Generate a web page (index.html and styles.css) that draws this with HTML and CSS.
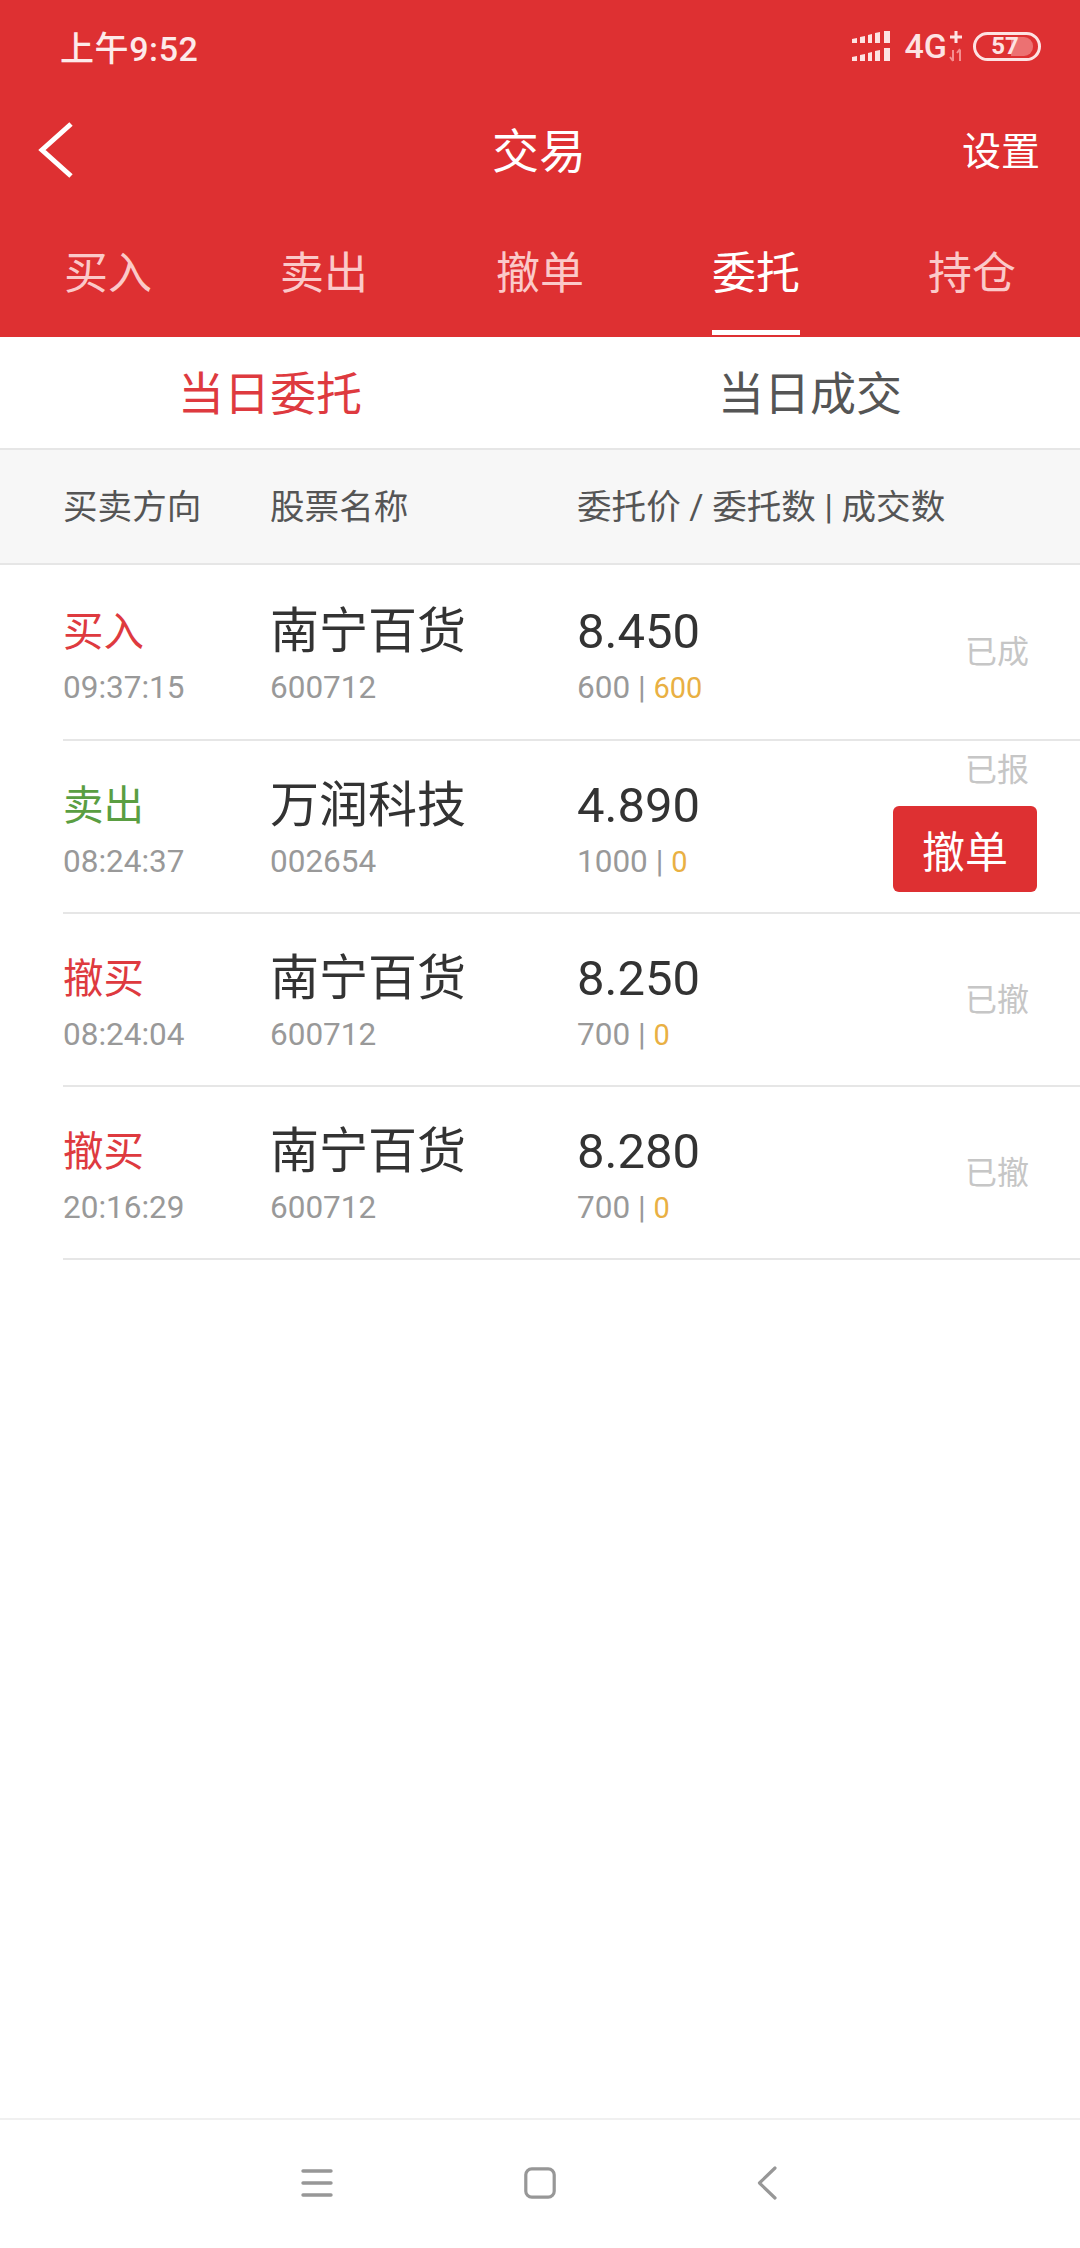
FILE: index.html
```html
<!DOCTYPE html>
<html lang="zh-CN">
<head>
<meta charset="utf-8">
<title>交易</title>
<link rel="stylesheet" href="styles.css">
</head>
<body>
<div class="app">
  <header class="head">
    <div class="status">
      <span class="time">上午9:52</span>
      <div class="sys">
        <svg class="signal" width="40" height="30" viewBox="0 0 40 30" fill="#fde3e3">
          <path d="M0 8l5-1v5H0zM8 6l5-1v7H8zM16 4l4-1v9h-4zM23 2l5-1v11h-5zM32 0h6v12h-6z"/>
          <path d="M0 26l5-1v5H0zM8 24l5-1v7H8zM16 22l4-1v9h-4zM23 20l5-1v11h-5zM32 17h6v13h-6z"/>
        </svg>
        <span class="net">4G</span>
        <svg class="plus" width="14" height="32" viewBox="0 0 14 32">
          <path d="M7 1v12M1 7h12" stroke="#fde3e3" stroke-width="3" fill="none"/>
          <path d="M4 31V20M1 27l3 4M11 31V20M8 23l3-4" stroke="#f58f8f" stroke-width="2" fill="none"/>
        </svg>
        <div class="battery"><span class="charge"></span><span class="level">57</span></div>
      </div>
    </div>
    <div class="titlebar">
      <svg class="back" width="36" height="56" viewBox="0 0 36 56"><path d="M33 2L4 28l29 26" fill="none" stroke="#fff" stroke-width="5"/></svg>
      <h1 class="title">交易</h1>
      <a class="setting">设置</a>
    </div>
    <nav class="tabs">
      <a class="tab"><span class="tab-label">买入</span></a>
      <a class="tab"><span class="tab-label">卖出</span></a>
      <a class="tab"><span class="tab-label">撤单</span></a>
      <a class="tab tab-on"><span class="tab-label">委托</span></a>
      <a class="tab"><span class="tab-label">持仓</span></a>
    </nav>
  </header>

  <div class="subtabs">
    <a class="subtab subtab-on">当日委托</a>
    <a class="subtab">当日成交</a>
  </div>

  <div class="cols">
    <span>买卖方向</span>
    <span>股票名称</span>
    <span>委托价 / 委托数 | 成交数</span>
  </div>

  <main class="list">
    <div class="row row-first">
      <div class="cell"><div class="main dir red">买入</div><div class="sub">09:37:15</div></div>
      <div class="cell"><div class="main name">南宁百货</div><div class="sub">600712</div></div>
      <div class="cell"><div class="main price">8.450</div><div class="sub">600 | <em>600</em></div></div>
      <div class="state">已成</div>
    </div>
    <div class="row">
      <div class="cell"><div class="main dir green">卖出</div><div class="sub">08:24:37</div></div>
      <div class="cell"><div class="main name">万润科技</div><div class="sub">002654</div></div>
      <div class="cell"><div class="main price">4.890</div><div class="sub">1000 | <em>0</em></div></div>
      <div class="state state-top"><span>已报</span><button class="cancel">撤单</button></div>
    </div>
    <div class="row">
      <div class="cell"><div class="main dir red">撤买</div><div class="sub">08:24:04</div></div>
      <div class="cell"><div class="main name">南宁百货</div><div class="sub">600712</div></div>
      <div class="cell"><div class="main price">8.250</div><div class="sub">700 | <em>0</em></div></div>
      <div class="state">已撤</div>
    </div>
    <div class="row">
      <div class="cell"><div class="main dir red">撤买</div><div class="sub">20:16:29</div></div>
      <div class="cell"><div class="main name">南宁百货</div><div class="sub">600712</div></div>
      <div class="cell"><div class="main price">8.280</div><div class="sub">700 | <em>0</em></div></div>
      <div class="state">已撤</div>
    </div>
  </main>

  <footer class="navbar">
    <svg width="32" height="30" viewBox="0 0 32 30"><path d="M2 3h28M2 15h28M2 27h28" stroke="#979797" stroke-width="3.4" stroke-linecap="round" fill="none"/></svg>
    <svg width="32" height="32" viewBox="0 0 32 32"><rect x="1.8" y="1.8" width="28.4" height="28.4" rx="6" fill="none" stroke="#979797" stroke-width="3.2"/></svg>
    <svg width="20" height="34" viewBox="0 0 20 34"><path d="M18 2L2.500 17 18 32" fill="none" stroke="#979797" stroke-width="3.2" stroke-linecap="round" stroke-linejoin="round"/></svg>
  </footer>
</div>
</body>
</html>
```
FILE: styles.css
```css
* { box-sizing: border-box; }
html, body { margin: 0; padding: 0; background: #fff; }
body { font-family: Roboto, "Noto Sans CJK SC", sans-serif; }
.app { width: 1080px; height: 2248px; display: flex; flex-direction: column; overflow: hidden; }

.head { height: 337px; background: #de3032; color: #fff; display: flex; flex-direction: column; flex: none; }
.status { height: 94px; display: flex; justify-content: space-between; align-items: center; padding: 0 39px 2px 60px; }
.time { font-size: 34px; font-weight: 500; letter-spacing: 0.6px; color: #fdeaea; }
.sys { display: flex; align-items: center; }
.net { font-size: 34px; font-weight: 500; color: #fde3e3; margin-left: 13px; }
.plus { margin-left: 2px; margin-right: 10px; }
.battery { width: 68px; height: 29px; border: 3.5px solid #fde3e3; border-radius: 15px; display: flex; align-items: center; justify-content: center; position: relative; padding-right: 4px; }
.charge { position: absolute; top: 2px; bottom: 2px; right: 5px; width: 22px; background: #ec7172; border-radius: 0 9px 9px 0; }
.level { position: relative; font-size: 24px; font-weight: 700; line-height: 1; color: #fde3e3; }

.titlebar { height: 116px; display: grid; grid-template-columns: 1fr auto 1fr; align-items: center; padding: 0 40px 0 38px; flex: none; }
.back { display: block; margin-bottom: 5px; }
.title { margin: 0; font-size: 47px; font-weight: 400; line-height: 60px; text-align: center; }
.setting { font-size: 39px; line-height: 60px; justify-self: end; }

.tabs { flex: 1; display: grid; grid-template-columns: repeat(5, 216px); }
.tab { display: flex; justify-content: center; color: #fbc9c9; font-size: 44px; }
.tab-label { height: 125px; padding-top: 35px; line-height: 58px; border-bottom: 5px solid transparent; }
.tab-on { color: #fff; }
.tab-on .tab-label { border-bottom-color: #fff; }

.subtabs { height: 113px; display: grid; grid-template-columns: 1fr 1fr; border-bottom: 2px solid #e6e6e6; flex: none; }
.subtab { display: flex; align-items: center; justify-content: center; padding-bottom: 6px; font-size: 46px; color: #555; }
.subtab-on { color: #de3a3f; }

.cols { height: 115px; background: #f7f7f7; border-bottom: 2px solid #e6e6e6; display: grid; grid-template-columns: 207px 307px 1fr; align-items: center; padding: 0 0 5px 63px; font-size: 34.6px; color: #555; flex: none; }

.list { flex: 1; }
.row { height: 173px; margin-left: 63px; border-bottom: 2px solid #e6e6e6; display: grid; grid-template-columns: 207px 307px 1fr auto; }
.row-first { height: 176px; }
.cell { padding-top: 37px; }
.row-first .cell { padding-top: 39px; }
.main { height: 56px; line-height: 56px; white-space: nowrap; }
.sub { height: 56px; line-height: 56px; font-size: 31.5px; color: #999; white-space: nowrap; }
.sub em { font-style: normal; font-size: 29px; color: #e9b043; }
.dir { font-size: 40.5px; }
.red { color: #de3a3f; }
.green { color: #5a9e42; }
.name { font-size: 49px; color: #333; }
.price { font-size: 49px; color: #333; }
.state { align-self: center; padding-right: 51px; font-size: 32px; line-height: 40px; color: #c6c6c6; }
.state-top { align-self: start; padding: 9px 43px 0 0; display: flex; flex-direction: column; align-items: flex-end; gap: 16px; }
.state-top span { padding-right: 8px; }
.cancel { width: 144px; height: 86px; border: 0; padding: 0; border-radius: 6px; background: #de3032; color: #fff; font-family: inherit; font-size: 43px; }

.navbar { height: 130px; border-top: 2px solid #f0f0f0; display: grid; grid-template-columns: 226px 220px 234px; justify-items: center; align-items: center; padding: 0 0 2px 204px; flex: none; }
```
